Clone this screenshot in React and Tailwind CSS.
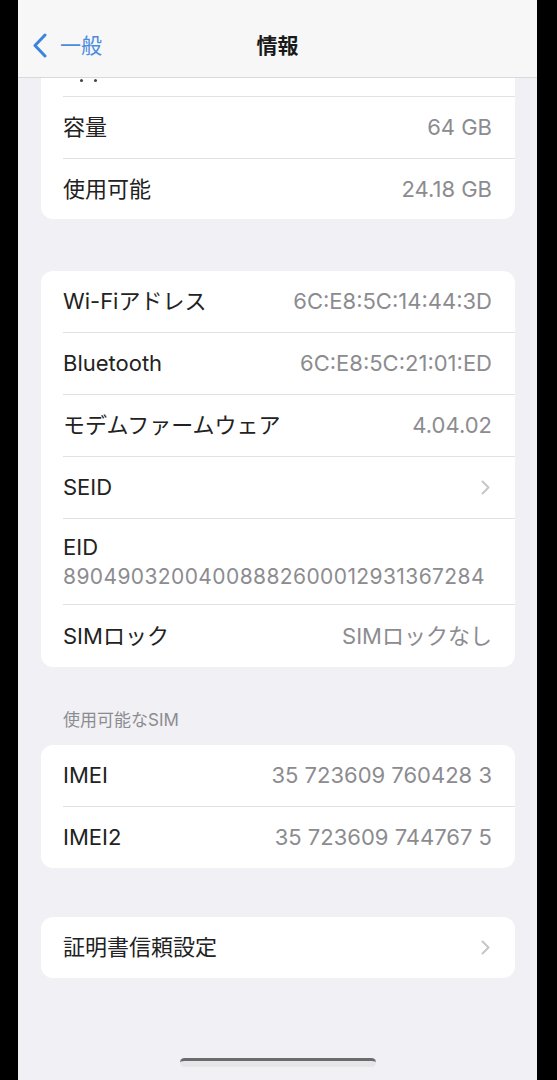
const font = { fontFamily: "Inter, 'Noto Sans CJK JP', sans-serif" };

function Chevron() {
  return (
    <svg width="9" height="15" viewBox="0 0 9 15" fill="none">
      <path d="M1.5 1.5 L7.5 7.5 L1.5 13.5" stroke="#c6c6ca" strokeWidth="2" strokeLinecap="round" strokeLinejoin="round" />
    </svg>
  );
}

function Row({ label, value, chevron, last, h = 'h-[62px]' }) {
  return (
    <div className={`flex pl-[22px] ${h}`}>
      <div className={`flex flex-1 items-center justify-between pr-[23px] ${last ? '' : 'border-b border-[#e2e2e6]'}`}>
        <span className="text-[22px] text-[#222222]">{label}</span>
        {chevron ? (
          <span className="mr-[2px]"><Chevron /></span>
        ) : (
          <span className="text-[22px] text-[#8c8c90]">{value}</span>
        )}
      </div>
    </div>
  );
}

function Card({ children, className = '' }) {
  return (
    <div className={`mx-[23px] w-[474px] overflow-hidden rounded-[12px] bg-white ${className}`}>
      {children}
    </div>
  );
}

export default function App() {
  return (
    <div className="flex h-[1080px] w-[557px] bg-black" style={font}>
      <div className="w-[18px] shrink-0" />
      <div className="flex w-[519px] shrink-0 flex-col overflow-hidden bg-[#f0f0f5]">
        {/* nav bar */}
        <div className="relative flex h-[78px] shrink-0 items-center border-b border-[#d9d9dc] bg-[#f7f7f8] pt-[14px]">
          <div className="flex items-center pl-[15px]">
            <svg width="14" height="25" viewBox="0 0 14 25" fill="none">
              <path d="M12 2 L2 12.5 L12 23" stroke="#3d84de" strokeWidth="3" strokeLinecap="round" strokeLinejoin="round" />
            </svg>
            <span className="ml-[13px] text-[21px] text-[#4a8be0]">一般</span>
          </div>
          <div className="absolute left-0 right-0 top-[14px] flex h-[64px] items-center justify-center">
            <span className="text-[21px] font-bold text-[#1a1a1a]">情報</span>
          </div>
        </div>

        {/* card 1 (scrolled under nav) */}
        <Card className="rounded-t-none">
          <div className="flex h-[19px] pl-[22px]">
            <div className="relative flex-1 border-b border-[#e2e2e6]">
              <span className="absolute left-[17px] top-[1px] h-[3px] w-[3px] rounded-full bg-[#444]" />
              <span className="absolute left-[31px] top-[1px] h-[3px] w-[3px] rounded-full bg-[#444]" />
            </div>
          </div>
          <Row label="容量" value="64 GB" />
          <Row label="使用可能" value="24.18 GB" last h="h-[60px]" />
        </Card>

        {/* card 2 */}
        <Card className="mt-[52px]">
          <Row label="Wi-Fiアドレス" value="6C:E8:5C:14:44:3D" />
          <Row label="Bluetooth" value="6C:E8:5C:21:01:ED" />
          <Row label="モデムファームウェア" value="4.04.02" />
          <Row label="SEID" chevron />
          <div className="flex h-[86px] pl-[22px]">
            <div className="flex flex-1 flex-col justify-center border-b border-[#e2e2e6] pr-[23px]">
              <span className="text-[22px] leading-[28px] text-[#222222]">EID</span>
              <span className="mt-[3px] text-[21px] leading-[26px] tracking-[0.4px] text-[#8c8c90]">
                89049032004008882600012931367284
              </span>
            </div>
          </div>
          <Row label="SIMロック" value="SIMロックなし" last />
        </Card>

        {/* section header */}
        <div className="flex h-[78px] shrink-0 items-end pb-[12px] pl-[45px]">
          <span className="text-[17px] text-[#8c8c90]">使用可能なSIM</span>
        </div>

        {/* card 3 */}
        <Card>
          <Row label="IMEI" value="35 723609 760428 3" />
          <Row label="IMEI2" value="35 723609 744767 5" last h="h-[61px]" />
        </Card>

        {/* card 4 */}
        <Card className="mt-[49px]">
          <Row label="証明書信頼設定" chevron last h="h-[61px]" />
        </Card>

        {/* home indicator */}
        <div className="mt-auto flex justify-center pb-[13px]">
          <div className="h-[9px] w-[196px] rounded-full border-t-[3px] border-[#6b6b6e] bg-[#e6e6e8]" />
        </div>
      </div>
    </div>
  );
}
